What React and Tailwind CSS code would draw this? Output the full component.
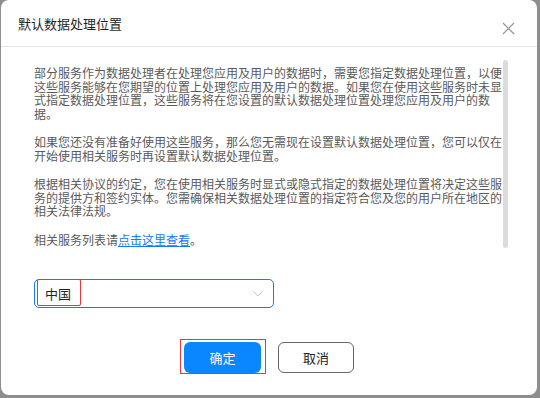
import React from "react"

const font = { fontFamily: '"Noto Sans CJK SC", "Microsoft YaHei", sans-serif' }

function CloseIcon() {
  return (
    <svg width="13" height="13" viewBox="0 0 13 13" fill="none" stroke="#8c939d" strokeWidth="1.2">
      <path d="M1 1 L12 12 M12 1 L1 12" />
    </svg>
  )
}

function Chevron() {
  return (
    <svg width="10" height="6" viewBox="0 0 10 6" fill="none" stroke="#c0c4cc" strokeWidth="1">
      <path d="M0.5 0.5 L5 5 L9.5 0.5" />
    </svg>
  )
}

export default function App() {
  return (
    <div className="w-[540px] h-[398px] bg-[#8e8e8e] overflow-hidden" style={font}>
      <div className="ml-[1px] w-[536px] h-[395px] bg-white rounded-lg flex flex-col">
        {/* Header */}
        <div className="h-[47px] flex items-center justify-between pl-[17px] pr-[22px] border-b border-[#e4e4e4]">
          <span className="text-[13px] text-[#1f1f1f] mt-[2px]">默认数据处理位置</span>
          <span className="mt-[10px]">
            <CloseIcon />
          </span>
        </div>

        {/* Body */}
        <div className="flex pl-[33px] pt-[19px]">
          <div className="w-[469px] text-[12px] leading-[13.5px] text-[#5a5a5a] pr-[1px]">
            <p>
              部分服务作为数据处理者在处理您应用及用户的数据时，需要您指定数据处理位置，以便这些服务能够在您期望的位置上处理您应用及用户的数据。如果您在使用这些服务时未显式指定数据处理位置，这些服务将在您设置的默认数据处理位置处理您应用及用户的数据。
            </p>
            <p className="mt-[15px]">
              如果您还没有准备好使用这些服务，那么您无需现在设置默认数据处理位置，您可以仅在开始使用相关服务时再设置默认数据处理位置。
            </p>
            <p className="mt-[15px]">
              根据相关协议的约定，您在使用相关服务时显式或隐式指定的数据处理位置将决定这些服务的提供方和签约实体。您需确保相关数据处理位置的指定符合您及您的用户所在地区的相关法律法规。
            </p>
            <p className="mt-[15px]">
              相关服务列表请<span className="text-[#1677ff] underline">点击这里查看</span>。
            </p>
          </div>
          <div className="w-[5px] h-[188px] mt-[-6px] bg-[#dcdcdc] rounded-sm"></div>
        </div>

        {/* Select */}
        <div className="pl-[33px] mt-[31px]">
          <div className="relative w-[240px] h-[29px] border border-[#1677ff] rounded-[5px] flex items-center justify-between pl-[10px] pr-[10px]">
            <span className="text-[13px] text-[#222]">中国</span>
            <Chevron />
            <div className="absolute left-[2px] top-[-1px] w-[44px] h-[27px] border border-[#e53935] rounded-[2px]"></div>
          </div>
        </div>

        {/* Footer */}
        <div className="flex gap-[17px] pl-[183px] mt-[34px]">
          <div className="relative">
            <button className="w-[77px] h-[31px] rounded-[6px] bg-[#0a86ff] text-white text-[13px]">确定</button>
            <div className="absolute left-[-4px] top-[-3px] w-[86px] h-[35px] border border-[#e53935]"></div>
          </div>
          <button className="w-[76px] h-[31px] rounded-[6px] border border-[#666] bg-white text-[#222] text-[13px]">取消</button>
        </div>
      </div>
    </div>
  )
}
